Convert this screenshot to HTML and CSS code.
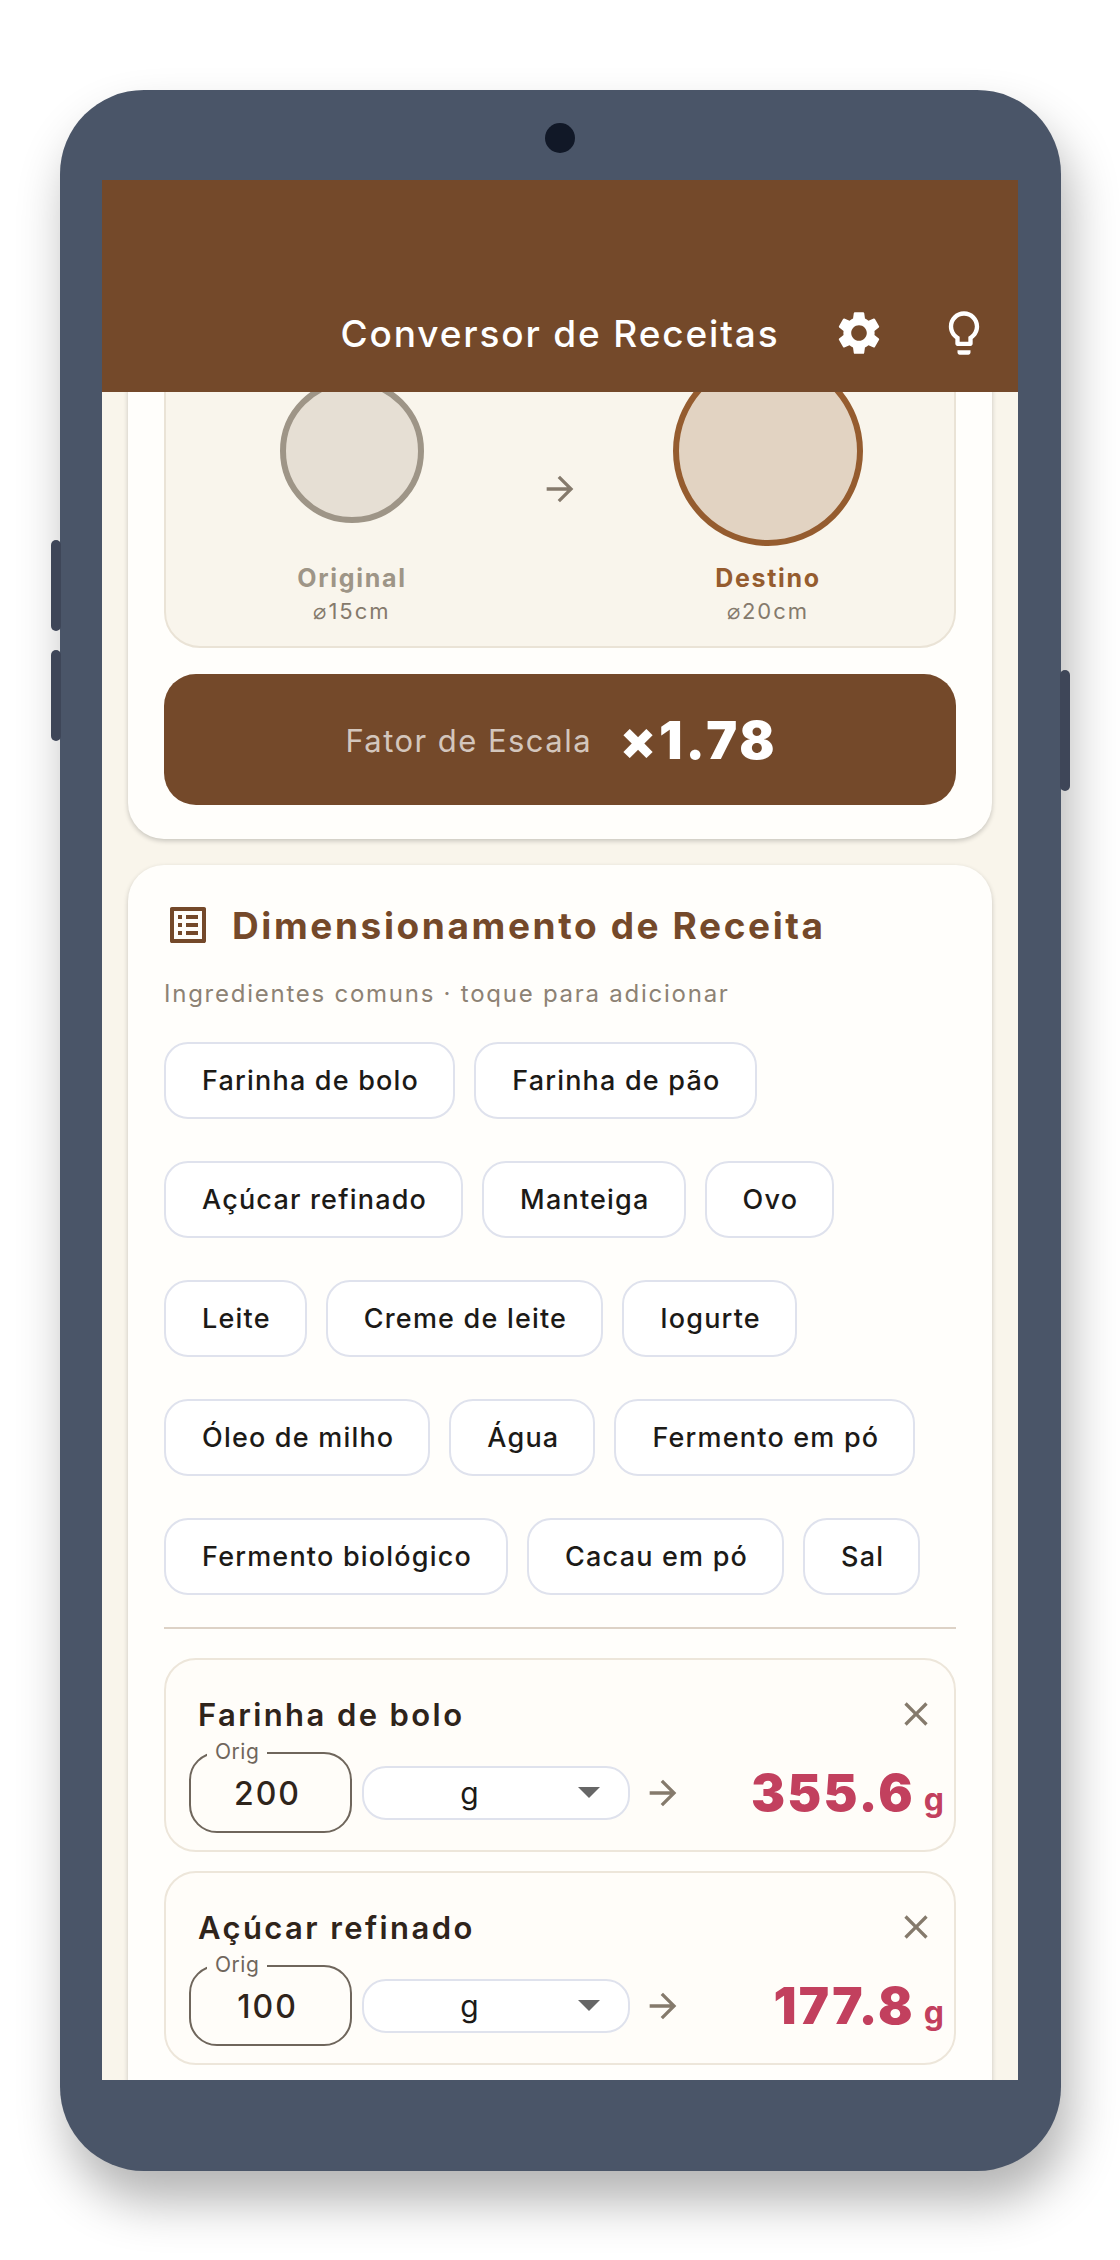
FILE: index.html
```html
<!DOCTYPE html>
<html>
<head>
<meta charset="utf-8">
<title>Conversor de Receitas</title>
<link rel="stylesheet" href="styles.css">
</head>
<body>

<div class="phone">
	<div class="btn btn-vol1"></div>
	<div class="btn btn-vol2"></div>
	<div class="btn btn-power"></div>
	<div class="camera"></div>

	<div class="screen">
		<div class="appbar">
			<div class="appbar-side"></div>
			<div class="appbar-title">Conversor de Receitas</div>
			<div class="appbar-side appbar-actions">
				<svg class="icon-bar" viewBox="0 0 24 24"><path d="M19.14 12.94c.04-.3.06-.61.06-.94 0-.32-.02-.64-.07-.94l2.03-1.58c.18-.14.23-.41.12-.61l-1.92-3.32c-.12-.22-.37-.29-.59-.22l-2.39.96c-.5-.38-1.03-.7-1.62-.94l-.36-2.54c-.04-.24-.24-.41-.48-.41h-3.84c-.24 0-.43.17-.47.41l-.36 2.54c-.59.24-1.13.57-1.62.94l-2.39-.96c-.22-.08-.47 0-.59.22L2.74 8.87c-.12.21-.08.47.12.61l2.03 1.58c-.05.3-.09.63-.09.94s.02.64.07.94l-2.03 1.58c-.18.14-.23.41-.12.61l1.92 3.32c.12.22.37.29.59.22l2.39-.96c.5.38 1.03.7 1.62.94l.36 2.54c.05.24.24.41.48.41h3.84c.24 0 .44-.17.47-.41l.36-2.54c.59-.24 1.13-.56 1.62-.94l2.39.96c.22.08.47 0 .59-.22l1.92-3.32c.12-.22.07-.47-.12-.61l-2.01-1.58zM12 15.6c-1.98 0-3.6-1.62-3.6-3.6s1.62-3.6 3.6-3.6 3.6 1.62 3.6 3.6-1.62 3.6-3.6 3.6z"/></svg>
				<svg class="icon-bar" viewBox="0 0 24 24"><path d="M9 21c0 .55.45 1 1 1h4c.55 0 1-.45 1-1v-1H9v1zm3-19C8.14 2 5 5.14 5 9c0 2.38 1.19 4.47 3 5.74V17c0 .55.45 1 1 1h6c.55 0 1-.45 1-1v-2.26c1.81-1.27 3-3.36 3-5.74 0-3.86-3.14-7-7-7zm2.85 11.1l-.85.6V16h-4v-2.3l-.85-.6C7.8 12.16 7 10.63 7 9c0-2.76 2.24-5 5-5s5 2.24 5 5c0 1.63-.8 3.16-2.15 4.1z"/></svg>
			</div>
		</div>

		<div class="scroll">
			<div class="card card-pan">
				<div class="pans">
					<div class="pan pan-orig">
						<div class="circle-box"><div class="circle"></div></div>
						<div class="pan-name">Original</div>
						<div class="pan-size">⌀15cm</div>
					</div>
					<svg class="icon-arrow" viewBox="0 0 24 24"><path d="M12 4l-1.41 1.41L16.17 11H4v2h12.17l-5.58 5.59L12 20l8-8z"/></svg>
					<div class="pan pan-dest">
						<div class="circle-box"><div class="circle"></div></div>
						<div class="pan-name">Destino</div>
						<div class="pan-size">⌀20cm</div>
					</div>
				</div>
				<div class="factor">
					<span class="factor-label">Fator de Escala</span>
					<span class="factor-value">×1.78</span>
				</div>
			</div>

			<div class="card card-recipe">
				<div class="section-head">
					<svg class="icon-list" viewBox="0 0 24 24"><path d="M19 5v14H5V5h14m1.1-2H3.9c-.5 0-.9.4-.9.9v16.2c0 .4.4.9.9.9h16.2c.4 0 .9-.5.9-.9V3.9c0-.5-.5-.9-.9-.9zM11 7h6v2h-6V7zm0 4h6v2h-6v-2zm0 4h6v2h-6zM7 7h2v2H7zm0 4h2v2H7zm0 4h2v2H7z"/></svg>
					<div class="section-title">Dimensionamento de Receita</div>
				</div>
				<div class="hint">Ingredientes comuns · toque para adicionar</div>

				<div class="chips">
					<div class="chip">Farinha de bolo</div>
					<div class="chip">Farinha de pão</div>
					<div class="chip">Açúcar refinado</div>
					<div class="chip">Manteiga</div>
					<div class="chip">Ovo</div>
					<div class="chip">Leite</div>
					<div class="chip">Creme de leite</div>
					<div class="chip">Iogurte</div>
					<div class="chip">Óleo de milho</div>
					<div class="chip">Água</div>
					<div class="chip">Fermento em pó</div>
					<div class="chip">Fermento biológico</div>
					<div class="chip">Cacau em pó</div>
					<div class="chip">Sal</div>
				</div>

				<div class="divider"></div>

				<div class="item">
					<div class="item-head">
						<div class="item-name">Farinha de bolo</div>
						<svg class="icon-close" viewBox="0 0 24 24"><path d="M19 6.41L17.59 5 12 10.59 6.41 5 5 6.41 10.59 12 5 17.59 6.41 19 12 13.41 17.59 19 19 17.59 13.41 12z"/></svg>
					</div>
					<div class="item-row">
						<div class="field"><span class="field-label">Orig</span>200</div>
						<div class="select"><span class="select-value">g</span><span class="select-caret"></span></div>
						<svg class="icon-arrow" viewBox="0 0 24 24"><path d="M12 4l-1.41 1.41L16.17 11H4v2h12.17l-5.58 5.59L12 20l8-8z"/></svg>
						<div class="result"><span class="result-num">355.6</span><span class="result-unit">g</span></div>
					</div>
				</div>

				<div class="item">
					<div class="item-head">
						<div class="item-name">Açúcar refinado</div>
						<svg class="icon-close" viewBox="0 0 24 24"><path d="M19 6.41L17.59 5 12 10.59 6.41 5 5 6.41 10.59 12 5 17.59 6.41 19 12 13.41 17.59 19 19 17.59 13.41 12z"/></svg>
					</div>
					<div class="item-row">
						<div class="field"><span class="field-label">Orig</span>100</div>
						<div class="select"><span class="select-value">g</span><span class="select-caret"></span></div>
						<svg class="icon-arrow" viewBox="0 0 24 24"><path d="M12 4l-1.41 1.41L16.17 11H4v2h12.17l-5.58 5.59L12 20l8-8z"/></svg>
						<div class="result"><span class="result-num">177.8</span><span class="result-unit">g</span></div>
					</div>
				</div>
			</div>
		</div>
	</div>
</div>

</body>
</html>
```

FILE: styles.css
```css
html, body {
	margin: 0;
	background: #fff;
}
body {
	padding: 90px 59px 89px 60px;
	font-family: "Inter", "Noto Sans", sans-serif;
	color: #2f241b;
}
.phone {
	position: relative;
	box-sizing: border-box;
	width: 1001px;
	height: 2081px;
	padding: 90px 43px 91px 42px;
	background: #4a5568;
	border-radius: 84px;
	box-shadow: 8px 30px 50px rgba(0, 0, 0, .3);
}
.camera {
	position: absolute;
	left: 485px;
	top: 33px;
	width: 30px;
	height: 30px;
	border-radius: 50%;
	background: #111827;
}
.btn {
	position: absolute;
	width: 10px;
	background: #3e4658;
	border-radius: 5px;
}
.btn-vol1 {
	left: -9px;
	top: 450px;
	height: 91px;
}
.btn-vol2 {
	left: -9px;
	top: 560px;
	height: 91px;
}
.btn-power {
	right: -9px;
	top: 580px;
	height: 121px;
}

.screen {
	display: flex;
	flex-direction: column;
	height: 100%;
	overflow: hidden;
	background: #f9f5eb;
}
.appbar {
	display: flex;
	align-items: center;
	flex: none;
	height: 118px;
	padding-top: 94px;
	background: #74492a;
	color: #fff;
}
.appbar-side {
	flex: 1;
}
.appbar-actions {
	display: flex;
	justify-content: flex-end;
	gap: 53px;
}
.appbar-title {
	font-size: 37px;
	font-weight: 500;
	letter-spacing: 1.85px;
	white-space: nowrap;
}
.icon-bar {
	width: 52px;
	height: 52px;
	fill: #fff;
}
.icon-bar:last-child {
	margin-right: 28px;
}

.scroll {
	flex: 1;
	overflow: hidden;
	padding: 0 26px;
}
.card {
	background: #fffefb;
	border-radius: 36px;
	box-shadow: 0 2px 5px rgba(0, 0, 0, .2);
	padding: 0 36px;
}
.card-pan {
	margin-top: -61px;
	padding-bottom: 34px;
}
.card-recipe {
	margin-top: 26px;
	padding-top: 36px;
	padding-bottom: 40px;
}

.pans {
	display: grid;
	grid-template-columns: 1fr auto 1fr;
	box-sizing: border-box;
	height: 317px;
	margin-bottom: 26px;
	padding: 23px 2px 0;
	background: #f9f5ec;
	border: 2px solid #eae3d6;
	border-radius: 36px;
}
.pan {
	display: flex;
	flex-direction: column;
	align-items: center;
}
.circle-box {
	display: flex;
	align-items: center;
	justify-content: center;
	height: 190px;
}
.circle {
	box-sizing: border-box;
	border-radius: 50%;
	border-style: solid;
	border-width: 6px;
}
.pan-orig .circle {
	width: 144px;
	height: 144px;
	background: #e6dfd4;
	border-color: #9e9587;
}
.pan-dest .circle {
	width: 190px;
	height: 190px;
	background: #e2d3c2;
	border-color: #955c2f;
}
.pan-name {
	margin-top: 17px;
	font-size: 25px;
	font-weight: 700;
	letter-spacing: 1.7px;
	color: #9e9587;
}
.pan-dest .pan-name {
	color: #955c2f;
}
.pan-size {
	margin-top: 5px;
	font-size: 22px;
	letter-spacing: 2px;
	color: #857a6c;
}
.icon-arrow {
	flex: none;
	width: 40px;
	height: 40px;
	fill: #857a6c;
}
.pans .icon-arrow {
	margin-top: 113px;
	padding: 0 4px;
}

.factor {
	display: flex;
	align-items: center;
	justify-content: center;
	gap: 28px;
	box-sizing: border-box;
	height: 131px;
	padding: 2px 0 0 3px;
	background: #74492a;
	border-radius: 32px;
}
.factor-label {
	font-size: 31px;
	letter-spacing: 1.45px;
	color: rgba(255, 255, 255, .7);
}
.factor-value {
	font-size: 52px;
	font-weight: 900;
	letter-spacing: 3px;
	color: #fff;
}

.section-head {
	display: flex;
	align-items: center;
	gap: 20px;
	height: 48px;
}
.icon-list {
	flex: none;
	width: 48px;
	height: 48px;
	fill: #74492a;
}
.section-title {
	font-size: 37px;
	font-weight: 700;
	letter-spacing: 2.6px;
	color: #74492a;
}
.hint {
	margin-top: 30px;
	font-size: 24px;
	letter-spacing: 1.75px;
	color: #8d8274;
}
.chips {
	display: flex;
	flex-wrap: wrap;
	gap: 42px 19px;
	margin-top: 34px;
}
.chip {
	display: flex;
	align-items: center;
	box-sizing: border-box;
	height: 77px;
	padding: 0 34px 0 36px;
	background: #fff;
	border: 2px solid #dfe2ed;
	border-radius: 24px;
	font-size: 27px;
	font-weight: 450;
	letter-spacing: 1.2px;
	color: #1c1a17;
}
.divider {
	height: 2px;
	margin: 32px 0 29px;
	background: #ddd2c6;
}

.item {
	box-sizing: border-box;
	height: 194px;
	margin-bottom: 19px;
	padding: 30px 10px 0 23px;
	background: #fffdf9;
	border: 2px solid #ede6da;
	border-radius: 32px;
}
.item-head {
	display: flex;
	align-items: center;
	justify-content: space-between;
	height: 48px;
	padding-left: 9px;
}
.item-name {
	font-size: 31px;
	font-weight: 600;
	letter-spacing: 2.4px;
}
.icon-close {
	width: 40px;
	height: 40px;
	margin-right: 8px;
	fill: #857a6c;
}
.item-row {
	display: flex;
	align-items: center;
	margin-top: 14px;
}
.field {
	position: relative;
	flex: none;
	box-sizing: border-box;
	width: 163px;
	height: 81px;
	margin-right: 10px;
	padding-right: 6px;
	border: 2px solid #6f665c;
	border-radius: 28px;
	text-align: center;
	line-height: 79px;
	font-size: 32px;
	font-weight: 500;
	letter-spacing: 2px;
}
.field-label {
	position: absolute;
	left: 16px;
	top: -16px;
	padding: 0 8px;
	background: #fffdf9;
	line-height: 28px;
	font-size: 21px;
	font-weight: 400;
	letter-spacing: .5px;
	color: #6f665c;
}
.select {
	display: flex;
	align-items: center;
	flex: none;
	box-sizing: border-box;
	width: 268px;
	height: 54px;
	margin-right: 13px;
	padding: 0 28px 0 0;
	background: #fff;
	border: 2px solid #dfe2ed;
	border-radius: 24px;
}
.select-value {
	flex: 1;
	padding-right: 3px;
	text-align: center;
	font-size: 30px;
	color: #1c1a17;
}
.select-caret {
	width: 0;
	height: 0;
	border-left: 11px solid transparent;
	border-right: 11px solid transparent;
	border-top: 11px solid #666;
}
.result {
	flex: 1;
	display: flex;
	align-items: baseline;
	justify-content: flex-end;
	gap: 9px;
	color: #c2405e;
}
.result-num {
	font-size: 51px;
	font-weight: 900;
	letter-spacing: 2.2px;
}
.result-unit {
	font-size: 32px;
	font-weight: 700;
}
```
